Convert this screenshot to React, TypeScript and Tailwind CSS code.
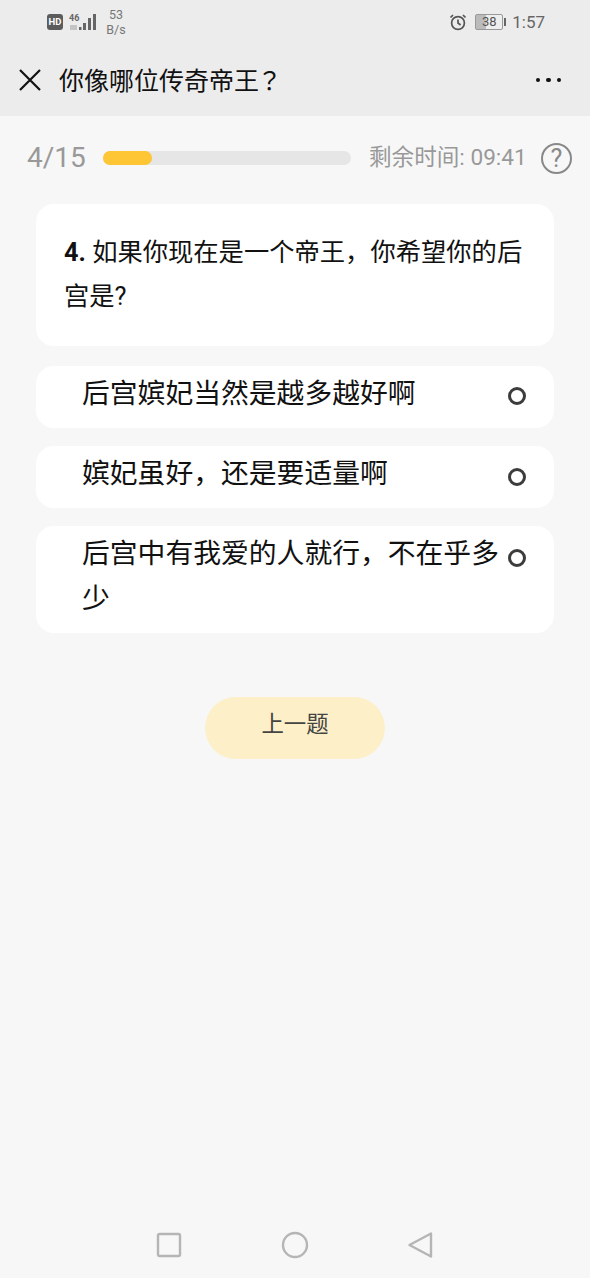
const font = { fontFamily: '"Roboto", "Noto Sans CJK SC", sans-serif' };

const options = [
  { text: "后宫嫔妃当然是越多越好啊", cls: "h-[62px] mt-5", dot: "top-[21px]" },
  { text: "嫔妃虽好，还是要适量啊", cls: "h-[62px] mt-[18px]", dot: "top-[22px]" },
  { text: "后宫中有我爱的人就行，不在乎多少", cls: "h-[107px] mt-[18px]", dot: "top-[23px]" },
];

function StatusBar() {
  return (
    <div className="h-[44px] flex items-start justify-between pl-[47px] pr-[45px] pt-[9px] text-[#666]">
      <div className="flex items-start">
        <div className="mt-[5px] w-[16px] h-[16px] rounded-[3px] bg-[#5c5c5c] text-white text-[9.5px] font-bold leading-[16px] text-center">
          HD
        </div>
        <svg width="33" height="22" viewBox="0 0 33 22" className="ml-[5px] mt-[3px]" fill="#666">
          <text x="1" y="9" fontSize="9" fontWeight="700" fontFamily="Roboto">46</text>
          <rect x="2" y="13" width="7" height="5" fill="#c4c4c4" />
          <rect x="11" y="15" width="2.500" height="3" />
          <rect x="15" y="11" width="3" height="7" />
          <rect x="20" y="6" width="3" height="12" />
          <rect x="25" y="2" width="3" height="16" />
        </svg>
        <div className="ml-[2px] -mt-[2px] w-[26px] text-center text-[12.5px] leading-[15px] text-[#777]">
          53
          <br />
          B/s
        </div>
      </div>
      <div className="flex items-center mt-[3px]">
        <svg width="18" height="18" viewBox="0 0 18 18" fill="none" stroke="#555" strokeWidth="1.7">
          <circle cx="9" cy="10" r="6.4" />
          <path d="M9 6.5V10l2.6 2M1.5 4.5 4 2M16.500 4.500 14 2" />
        </svg>
        <div className="ml-[8px] w-[28px] h-[16px] border border-[#999] rounded-[2px] bg-[linear-gradient(90deg,#bbb_38%,#eee_38%)] text-[13px] leading-[14px] text-center text-[#555]">
          38
        </div>
        <div className="ml-[1px] w-[2px] h-[8px] bg-[#666]" />
        <div className="ml-[6px] text-[17px] leading-[20px] text-[#666]">1:57</div>
      </div>
    </div>
  );
}

export default function App() {
  return (
    <div className="h-[1278px] w-[590px] overflow-hidden bg-[#f7f7f7] flex flex-col" style={font}>
      <div className="h-[116px] bg-[#ececec] shrink-0">
        <StatusBar />
        <div className="h-[72px] flex items-center pl-[18px] pr-[29px]">
          <svg width="24" height="24" viewBox="0 0 24 24" fill="none" stroke="#111" strokeWidth="2.2">
            <path d="M2 2 22 22M22 2 2 22" />
          </svg>
          <div className="ml-[17px] mt-[1px] text-[25px] text-[#111] leading-none">
            你像哪位传奇帝王<span className="-ml-[2px] font-['Noto_Sans_CJK_TC']">？</span>
          </div>
          <div className="ml-auto flex gap-[6px]">
            <span className="w-[4.5px] h-[4.5px] rounded-full bg-[#111]" />
            <span className="w-[4.5px] h-[4.5px] rounded-full bg-[#111]" />
            <span className="w-[4.5px] h-[4.5px] rounded-full bg-[#111]" />
          </div>
        </div>
      </div>

      <div className="h-[84px] shrink-0 flex items-center pl-[27px] pr-[18px]">
        <div className="w-[76px] text-[28px] leading-none text-[#999]">4/15</div>
        <div className="w-[248px] h-[14px] rounded-full bg-[#e6e6e6]">
          <div className="w-[49px] h-[14px] rounded-full bg-[#fec534]" />
        </div>
        <div className="ml-[18px] text-[22.6px] leading-none text-[#999] whitespace-nowrap">剩余时间: 09:41</div>
        <div className="ml-auto w-[31px] h-[31px] rounded-full border-2 border-[#888] text-[#888] text-[25px] leading-[27px] text-center">
          ?
        </div>
      </div>

      <div className="mx-[36px] mt-[4px]">
        <div className="h-[142px] rounded-[18px] bg-white px-[28px] pt-[27px] text-[25.3px] leading-[44px] text-[#111]">
          <b>4.</b> 如果你现在是一个帝王，你希望你的后宫是?
        </div>

        {options.map((o) => (
          <div key={o.text} className={`relative rounded-[18px] bg-white pl-[46px] pr-[52px] pt-[5px] text-[27.8px] leading-[45px] text-[#111] ${o.cls}`}>
            {o.text}
            <span className={`absolute right-[28px] w-[18px] h-[18px] rounded-full border-[3.5px] border-[#3c3c3c] ${o.dot}`} />
          </div>
        ))}

        <div className="mt-[64px] mx-auto w-[180px] h-[62px] rounded-full bg-[#fdefc8] text-[22.4px] text-[#444] flex items-center justify-center pb-[6px]">
          上一题
        </div>
      </div>

      <div className="mt-auto h-[66px] flex items-center justify-between pl-[156px] pr-[157px] shrink-0">
        <svg width="26" height="26" viewBox="0 0 26 26" fill="none" stroke="#b5b5b5" strokeWidth="2.4">
          <rect x="2" y="2" width="22" height="22" rx="1.500" />
        </svg>
        <svg width="28" height="28" viewBox="0 0 28 28" fill="none" stroke="#b5b5b5" strokeWidth="2.4">
          <circle cx="14" cy="14" r="12" />
        </svg>
        <svg width="26" height="28" viewBox="0 0 26 28" fill="none" stroke="#b5b5b5" strokeWidth="2.4" strokeLinejoin="round">
          <path d="M24 2.500V25.500L2.500 14Z" />
        </svg>
      </div>
    </div>
  );
}
